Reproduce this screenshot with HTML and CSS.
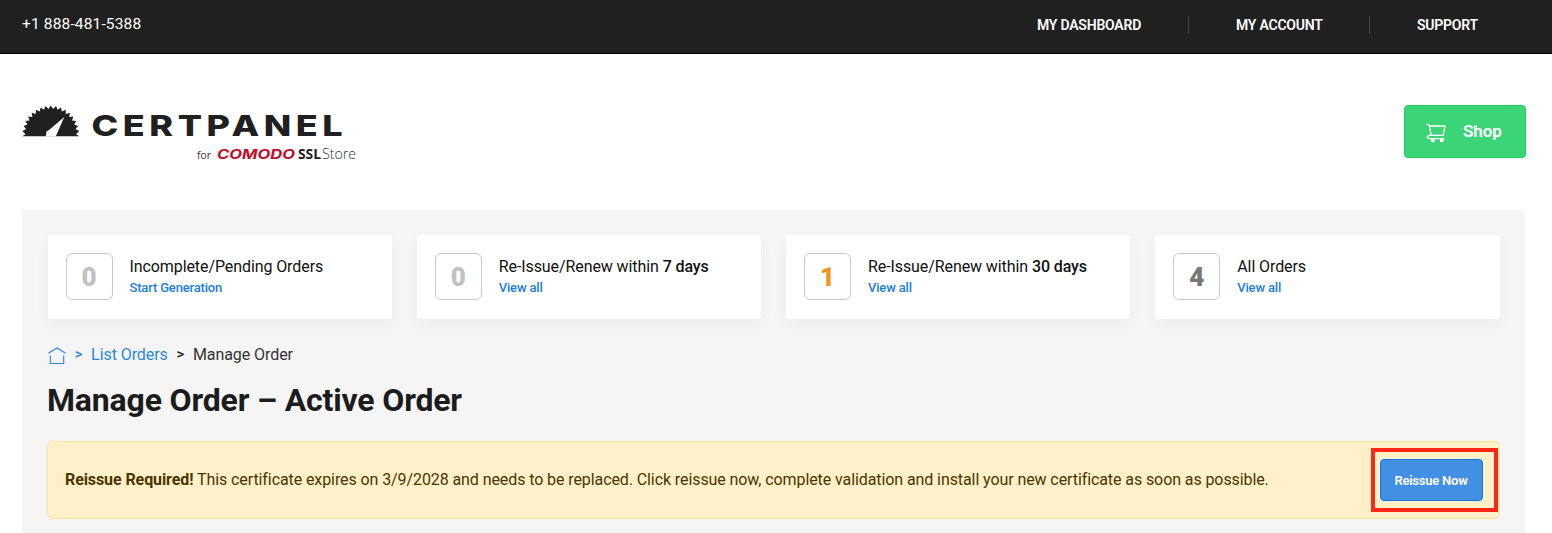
FILE: index.html
```html
<!DOCTYPE html>
<html lang="en">
<head>
<meta charset="utf-8">
<title>CertPanel - Manage Order</title>
<link rel="stylesheet" href="styles.css">
</head>
<body>
<header class="topbar">
  <span class="phone">+1 888-481-5388</span>
  <nav class="topnav">
    <a class="nav-dash">MY DASHBOARD</a>
    <a class="nav-account">MY ACCOUNT</a>
    <a class="nav-support">SUPPORT</a>
  </nav>
</header>
<div class="brandbar">
  <svg class="logo" width="340" height="62" viewBox="0 0 340 62">
    <g transform="translate(28.8 34)" fill="#202020">
      <path d="M-28.5 2.3L-25.2 .3L-28.4 -3L-24.7 -5L-27.3 -8.1L-23.4 -9.4L-25.4 -12.9L-21.2 -13.4L-22.6 -17.4L-18.4 -17L-19.1 -21.2L-15 -20.1L-14.9 -24.3L-11.1 -22.5L-10.2 -26.6L-6.8 -24.2L-5.2 -28L-2.3 -25.1L0 -28.5L2.3 -25.1L5.2 -28L6.8 -24.2L10.2 -26.6L11.1 -22.5L14.9 -24.3L15 -20.1L19.1 -21.2L18.4 -17L22.6 -17.4L21.2 -13.4L25.4 -12.9L23.4 -9.4L27.3 -8.1L24.7 -5L28.4 -3L25.2 .3L28.5 2.3Z"/>
      <path fill="#fff" d="M13.5 -17L-1.8 -4L-4.2 -2.8L-5 2.6H4.9Z"/>
    </g>
    <text class="logo-name" transform="translate(69.5 35.6) scale(1.24 1)" textLength="202.5">CERTPANEL</text>
    <text class="logo-for" x="175" y="58.5" textLength="14" lengthAdjust="spacingAndGlyphs">for</text>
    <text class="logo-comodo" x="195" y="58.5" textLength="78" lengthAdjust="spacingAndGlyphs">COMODO</text>
    <text class="logo-ssl" x="276" y="58.5" textLength="23" lengthAdjust="spacingAndGlyphs">SSL</text>
    <text class="logo-store" x="300" y="58.5" textLength="34" lengthAdjust="spacingAndGlyphs">Store</text>
  </svg>
  <a class="shop">
    <svg width="20" height="20" viewBox="0 0 20 20" fill="none" stroke="#fff" stroke-width="1.3" stroke-linecap="round" stroke-linejoin="round">
      <path d="M.8 1.2L3.2 2.1L5.2 12.3M3.6 3H19L17.2 12.3H4C.7 12.3.7 15.6 3.2 15.6H17.7"/>
      <circle cx="7" cy="17.4" r="1.3" fill="#fff"/><circle cx="15.8" cy="17.4" r="1.3" fill="#fff"/>
    </svg>
    <span>Shop</span>
  </a>
</div>
<main class="panel">
  <section class="cards">
    <div class="card"><div class="count">0</div><div class="info"><div class="label">Incomplete/Pending Orders</div><a class="link">Start Generation</a></div></div>
    <div class="card"><div class="count">0</div><div class="info"><div class="label">Re-Issue/Renew within <b>7 days</b></div><a class="link">View all</a></div></div>
    <div class="card"><div class="count count-warn">1</div><div class="info"><div class="label">Re-Issue/Renew within <b>30 days</b></div><a class="link">View all</a></div></div>
    <div class="card"><div class="count count-all">4</div><div class="info"><div class="label">All Orders</div><a class="link">View all</a></div></div>
  </section>
  <nav class="crumbs">
    <svg width="18" height="18" viewBox="0 0 18 18" fill="none" stroke="#2b86e0" stroke-width="1.1"><path d="M.4 6.2L9 1L17.6 6.2M2.3 8.5V16.5H15.7V8.5"/></svg>
    <span class="sep sep-blue">&gt;</span>
    <a class="crumb-link">List Orders</a>
    <span class="sep">&gt;</span>
    <span class="current">Manage Order</span>
  </nav>
  <h1 class="title">Manage Order – Active Order</h1>
  <section class="alert">
    <p class="message"><b>Reissue Required!</b> This certificate expires on 3/9/2028 and needs to be replaced. Click reissue now, complete validation and install your new certificate as soon as possible.</p>
    <div class="highlight"><button class="reissue">Reissue Now</button></div>
  </section>
</main>
</body>
</html>
```

FILE: styles.css
```css
* { box-sizing: border-box; }
body { margin: 0; height: 533px; overflow: hidden; background: #fff; color: #111; font-family: Roboto, sans-serif; }
.topbar { display: flex; justify-content: space-between; height: 54px; padding: 0 74px 0 22px; background: #202020; border-bottom: 1px solid #000; color: #fff; }
.phone { font-size: 15.5px; letter-spacing: .15px; line-height: 18px; padding-top: 15px; }
.topnav { display: flex; align-items: flex-start; padding-top: 16px; font-size: 14px; letter-spacing: -.22px; font-weight: 600; line-height: 18px; white-space: nowrap; }
.nav-dash { width: 152px; border-right: 1px solid #444; }
.nav-account { width: 181px; padding-left: 47px; border-right: 1px solid #444; }
.nav-support { width: 108px; padding-left: 47px; }
.brandbar { display: flex; justify-content: space-between; align-items: flex-start; height: 156px; padding: 51px 26px 0 22px; }
.logo { display: block; margin-top: -5px; }
.logo-name { font-family: Inter, sans-serif; font-weight: 800; font-size: 29px; fill: #202020; }
.logo-for { font-family: "Open Sans", sans-serif; font-size: 11px; fill: #333; }
.logo-comodo { font-family: Inter, sans-serif; font-weight: 700; font-style: italic; font-size: 13.5px; fill: #c30c2a; }
.logo-ssl { font-family: "Open Sans", sans-serif; font-weight: 700; font-size: 14px; fill: #202020; }
.logo-store { font-family: "Open Sans", sans-serif; font-weight: 300; font-size: 14px; fill: #333; }
.shop { display: flex; align-items: center; gap: 17px; width: 122px; height: 53px; padding: 0 0 1px 21px; border: 1px solid #17d160; border-radius: 4px; background: #3bd578; color: #fff; font-size: 17px; font-weight: 600; letter-spacing: -.1px; }
.shop svg { margin-top: 3px; }
.panel { height: 323px; margin: 0 27px 0 22px; padding: 25px 25px 0; background: #f5f5f5; }
.cards { display: grid; grid-template-columns: repeat(4, 1fr); gap: 25px; margin: 0 .5px; }
.card { display: flex; height: 84px; padding: 18px; background: #fff; border-radius: 3px; box-shadow: 0 5px 15px rgba(0,0,0,.04); }
.count { flex: none; display: flex; align-items: center; justify-content: center; width: 47px; height: 47px; border: 1px solid #c8c8c8; border-radius: 6px; color: #c1c1c1; font-size: 26px; font-weight: 900; }
.count-warn { color: #f0961a; }
.count-all { color: #777; }
.info { padding: 4px 0 0 17px; }
.label { font-size: 16px; letter-spacing: -.09px; line-height: 20px; white-space: nowrap; color: #111; }
.label b { font-weight: 500; }
.link { display: block; margin-top: 3px; font-size: 13px; letter-spacing: -.17px; line-height: 16px; font-weight: 500; color: #1d7de2; }
.crumbs { display: flex; align-items: center; height: 20px; margin-top: 25px; padding-left: 1px; font-size: 16px; letter-spacing: -.07px; color: #333; }
.crumbs svg { margin-top: 4px; }
.sep { font-size: 15px; font-weight: 500; color: #222; margin: 0 8.7px; }
.sep-blue, .crumb-link { color: #2b86e0; }
.title { margin: 16px 0 0; font-size: 32px; letter-spacing: -.17px; line-height: 40px; font-weight: 700; color: #1c1c1c; }
.alert { display: flex; align-items: center; justify-content: space-between; height: 78px; margin-top: 21px; padding: 0 1px 0 17px; border: 1px solid #fce29a; border-radius: 5px; background: #fff0c9; }
.message { margin: -2px 0 0; font-size: 16px; letter-spacing: -.09px; color: #493600; white-space: nowrap; }
.message b { font-weight: 700; }
.highlight { width: 127px; height: 64px; margin-top: -1px; padding: 7px 0 0 5px; border: 4px solid #fd2815; }
.reissue { display: block; width: 103px; height: 42px; padding: 1px 1px 0 0; border: 1px solid #147ade; border-radius: 4px; background: #428fe4; color: #fff; font: 600 13px Roboto, sans-serif; letter-spacing: -.22px; }
```
